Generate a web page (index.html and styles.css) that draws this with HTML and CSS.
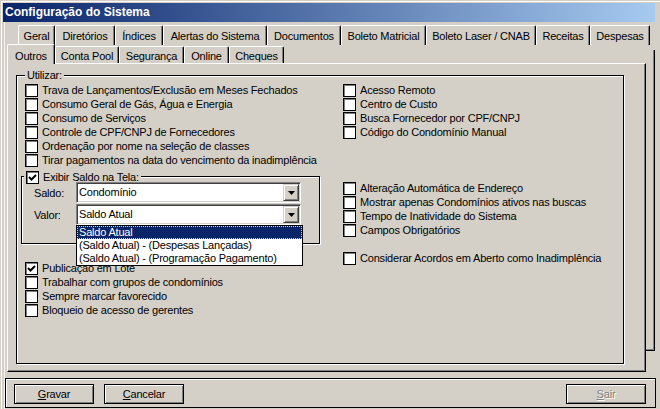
FILE: index.html
```html
<!DOCTYPE html>
<html lang="pt">
<head>
<meta charset="utf-8">
<title>Configuração do Sistema</title>
<link rel="stylesheet" href="styles.css">
</head>
<body>
<div class="window">
  <div class="titlebar">Configuração do Sistema</div>
  <div class="tabctl">
    <div class="tabrow row1">
      <div class="tab">Geral</div>
      <div class="tab">Diretórios</div>
      <div class="tab">Índices</div>
      <div class="tab">Alertas do Sistema</div>
      <div class="tab">Documentos</div>
      <div class="tab">Boleto Matricial</div>
      <div class="tab">Boleto Laser / CNAB</div>
      <div class="tab">Receitas</div>
      <div class="tab">Despesas</div>
    </div>
    <div class="tabrow row2">
      <div class="tab sel">Outros</div>
      <div class="tab">Conta Pool</div>
      <div class="tab">Segurança</div>
      <div class="tab">Online</div>
      <div class="tab">Cheques</div>
    </div>
    <div class="pagewrap">
      <div class="page">
        <div class="group g-main">
          <div class="legend">Utilizar:</div>
          <div class="cols">
            <div class="col col-left">
              <div class="row"><span class="cb"></span><span>Trava de Lançamentos/Exclusão em Meses Fechados</span></div>
              <div class="row"><span class="cb"></span><span>Consumo Geral de Gás, Água e Energia</span></div>
              <div class="row"><span class="cb"></span><span>Consumo de Serviços</span></div>
              <div class="row"><span class="cb"></span><span>Controle de CPF/CNPJ de Fornecedores</span></div>
              <div class="row"><span class="cb"></span><span>Ordenação por nome na seleção de classes</span></div>
              <div class="row"><span class="cb"></span><span>Tirar pagamentos na data do vencimento da inadimplência</span></div>

              <div class="group g-exibir">
                <div class="legend legend-cb row"><span class="cb checked"><svg width="9" height="9" viewBox="0 0 9 9"><polyline points="1,4 3.5,6.5 8,2" fill="none" stroke="#000" stroke-width="2"/></svg></span><span>Exibir Saldo na Tela:</span></div>
                <div class="fields">
                  <span class="flabel">Saldo:</span>
                  <div class="combo"><span class="ctext">Condomínio</span><span class="cbtn"><svg width="7" height="4" viewBox="0 0 7 4"><polygon points="0,0 7,0 3.5,4" fill="#000"/></svg></span></div>
                  <span class="flabel">Valor:</span>
                  <div class="combo"><span class="ctext">Saldo Atual</span><span class="cbtn"><svg width="7" height="4" viewBox="0 0 7 4"><polygon points="0,0 7,0 3.5,4" fill="#000"/></svg></span>
                    <div class="dropdown">
                      <div class="item hl">Saldo Atual</div>
                      <div class="item">(Saldo Atual) - (Despesas Lançadas)</div>
                      <div class="item">(Saldo Atual) - (Programação Pagamento)</div>
                    </div>
                  </div>
                </div>
              </div>

              <div class="row after-exibir"><span class="cb checked"><svg width="9" height="9" viewBox="0 0 9 9"><polyline points="1,4 3.5,6.5 8,2" fill="none" stroke="#000" stroke-width="2"/></svg></span><span>Publicação em Lote</span></div>
              <div class="row"><span class="cb"></span><span>Trabalhar com grupos de condomínios</span></div>
              <div class="row"><span class="cb"></span><span>Sempre marcar favorecido</span></div>
              <div class="row"><span class="cb"></span><span>Bloqueio de acesso de gerentes</span></div>
            </div>
            <div class="col col-right">
              <div class="row"><span class="cb"></span><span>Acesso Remoto</span></div>
              <div class="row"><span class="cb"></span><span>Centro de Custo</span></div>
              <div class="row"><span class="cb"></span><span>Busca Fornecedor por CPF/CNPJ</span></div>
              <div class="row"><span class="cb"></span><span>Código do Condomínio Manual</span></div>
              <div class="row gap-a"><span class="cb"></span><span>Alteração Automática de Endereço</span></div>
              <div class="row"><span class="cb"></span><span>Mostrar apenas Condomínios ativos nas buscas</span></div>
              <div class="row"><span class="cb"></span><span>Tempo de Inatividade do Sistema</span></div>
              <div class="row"><span class="cb"></span><span>Campos Obrigatórios</span></div>
              <div class="row gap-b"><span class="cb"></span><span>Considerar Acordos em Aberto como Inadimplência</span></div>
            </div>
          </div>
        </div>
      </div>
      <div class="edge"></div>
    </div>
  </div>
  <div class="bottombar">
    <div class="btn"><span><u>G</u>ravar</span></div>
    <div class="btn"><span><u>C</u>ancelar</span></div>
    <div class="btn disabled"><span><u>S</u>air</span></div>
  </div>
</div>
</body>
</html>
```
FILE: styles.css
```css
* { box-sizing: border-box; }
html, body { margin: 0; padding: 0; }
body {
  width: 660px;
  height: 409px;
  overflow: hidden;
  background: #d4d0c8;
  font-family: "Liberation Sans", Arial, sans-serif;
  font-size: 11px;
  letter-spacing: -0.2px;
  color: #000;
}
.window {
  width: 660px;
  height: 409px;
  padding-top: 3px;
  box-shadow: inset 1px 1px 0 #d4d0c8, inset 2px 2px 0 #fff, inset 4px 0 0 #d4d0c8, inset 5px 0 0 #f4f3f0;
}
.titlebar {
  margin-left: 3px;
  width: 652px;
  height: 19px;
  padding-left: 2px;
  line-height: 19px;
  background: linear-gradient(to right, #0a246a, #a6caf0);
  color: #fff;
  font-weight: bold;
  font-size: 12px;
  letter-spacing: 0;
}
.tabctl { margin-top: 3px; }
.tabrow { display: flex; }
.row1 { padding-left: 18px; height: 20px; }
.row2 { padding-left: 7px; height: 18px; }
.tab {
  flex: none;
  height: 20px;
  padding-top: 3px;
  line-height: 14px;
  text-align: center;
  white-space: nowrap;
  border-top: 1px solid #fff;
  border-left: 1px solid #fff;
  border-right: 1px solid #000;
  box-shadow: inset -1px 0 0 #808080;
  border-top-left-radius: 2px;
  border-top-right-radius: 2px;
  background: #d4d0c8;
}
.row1 .tab:nth-child(1) { width: 37px; }
.row1 .tab:nth-child(2) { width: 60px; }
.row1 .tab:nth-child(3) { width: 48px; }
.row1 .tab:nth-child(4) { width: 104px; }
.row1 .tab:nth-child(5) { width: 74px; }
.row1 .tab:nth-child(6) { width: 85px; }
.row1 .tab:nth-child(7) { width: 110px; }
.row1 .tab:nth-child(8) { width: 54px; }
.row1 .tab:nth-child(9) { width: 60px; }
.row2 .tab { height: 17px; margin-top: 1px; padding-top: 2px; }
.row2 .tab:nth-child(1) { width: 48px; }
.row2 .tab:nth-child(2) { width: 64px; }
.row2 .tab:nth-child(3) { width: 65px; }
.row2 .tab:nth-child(4) { width: 45px; }
.row2 .tab:nth-child(5) { width: 55px; }
.row2 .tab.sel {
  height: 20px;
  margin-top: -1px;
  padding-top: 4px;
  position: relative;
  z-index: 1;
}
.pagewrap { display: flex; margin-left: 7px; }
.page {
  flex: none;
  width: 639px;
  height: 309px;
  border-top: 1px solid #fff;
  border-left: 1px solid #fff;
  border-right: 1px solid #000;
  border-bottom: 1px solid #000;
  box-shadow: inset -1px -1px 0 #808080;
}
.edge {
  flex: none;
  width: 9px;
  height: 301px;
  margin-top: -13px;
  border-right: 1px solid #000;
  border-bottom: 1px solid #000;
  box-shadow: inset -1px -1px 0 #808080;
}
.group {
  display: flex;
  flex-direction: column;
  align-items: flex-start;
  border: 1px solid #000;
  box-shadow: 1px 1px 0 #fff, inset 1px 1px 0 #fff;
}
.legend {
  height: 13px;
  line-height: 13px;
  padding: 0 2px;
  background: #d4d0c8;
  white-space: nowrap;
}
.g-main {
  margin: 11px 0 0 8px;
  width: 608px;
  height: 289px;
  padding-left: 4px;
}
.g-main > .legend { margin: -7px 0 0 4px; }
.cols { display: flex; padding-top: 1px; align-self: stretch; }
.col { display: flex; flex-direction: column; align-items: flex-start; }
.col-left { width: 322px; flex: none; }
.col-left > .row { padding-left: 4px; }
.row {
  height: 14px;
  display: flex;
  align-items: center;
  gap: 4px;
  white-space: nowrap;
}
.cb {
  flex: none;
  width: 13px;
  height: 13px;
  background: #fff;
  border: 1px solid #000;
  box-shadow: inset 1px 1px 0 #808080;
  display: flex;
  align-items: center;
  justify-content: center;
}
.g-exibir {
  margin-top: 9px;
  width: 299px;
  height: 68px;
}
.legend-cb {
  height: 14px;
  margin: -7px 0 0 2px;
  padding: 0 2px;
  background: #d4d0c8;
}
.fields {
  display: grid;
  grid-template-columns: 42px 225px;
  row-gap: 1px;
  align-items: center;
  margin: -2px 0 0 12px;
}
.combo {
  position: relative;
  display: flex;
  align-items: stretch;
  height: 21px;
  padding: 1px;
  background: #fff;
  border: 1px solid;
  border-color: #808080 #fff #fff #808080;
  box-shadow: inset 1px 1px 0 #404040, inset -1px -1px 0 #d4d0c8;
}
.ctext {
  flex: 1;
  padding-left: 1px;
  line-height: 17px;
}
.cbtn {
  flex: none;
  width: 16px;
  height: 17px;
  background: #d4d0c8;
  border: 1px solid;
  border-color: #d4d0c8 #404040 #404040 #d4d0c8;
  box-shadow: inset 1px 1px 0 #fff, inset -1px -1px 0 #808080;
  display: flex;
  align-items: center;
  justify-content: center;
}
.dropdown {
  position: absolute;
  left: -1px;
  top: 20px;
  width: 227px;
  height: 41px;
  border: 1px solid #000;
  background: #fff;
  z-index: 2;
}
.item {
  height: 13px;
  line-height: 13px;
  padding-left: 2px;
  white-space: nowrap;
}
.item.hl {
  background: #0a246a;
  color: #fff;
  outline: 1px dotted #d8d8a0;
  outline-offset: -1px;
}
.after-exibir { margin-top: 17px; }
.gap-a { margin-top: 42px; }
.gap-b { margin-top: 14px; }
.bottombar {
  display: flex;
  gap: 10px;
  margin: 6px 0 0 5px;
  width: 651px;
  height: 30px;
  padding: 5px 9px 0 8px;
  border: 1px solid #000;
  box-shadow: inset 1px 1px 0 #fff;
}
.btn {
  width: 80px;
  height: 20px;
  display: flex;
  align-items: center;
  justify-content: center;
  border: 1px solid #000;
  box-shadow: inset 1px 1px 0 #fff, inset -1px -1px 0 #808080;
  background: #d4d0c8;
}
.btn.disabled {
  margin-left: auto;
  color: #808080;
  text-shadow: 1px 1px 0 #fff;
}
```
